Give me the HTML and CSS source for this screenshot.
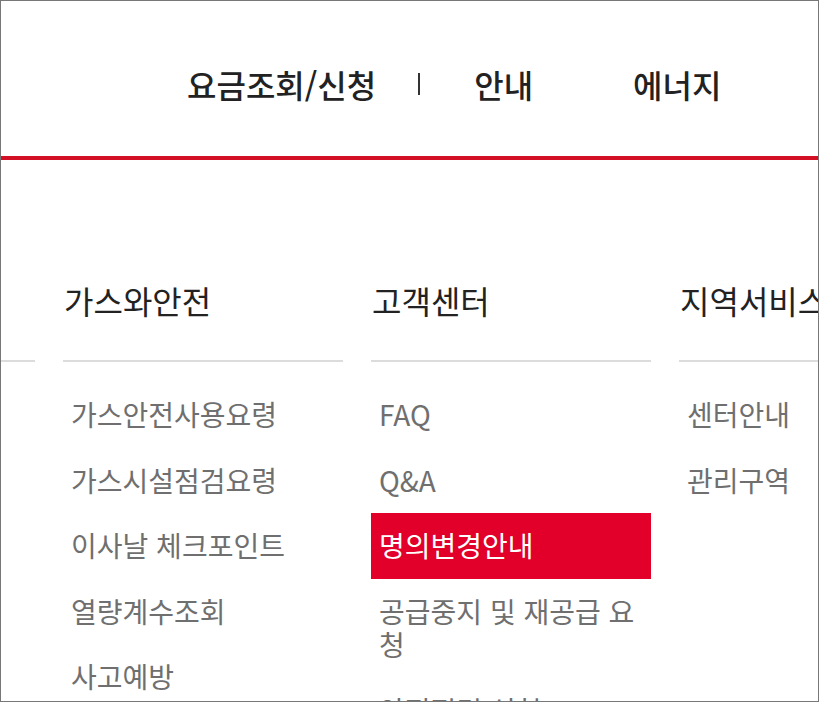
FILE: index.html
```html
<!DOCTYPE html>
<html lang="ko">
<head>
<meta charset="utf-8">
<title>메뉴</title>
<link rel="stylesheet" href="styles.css">
</head>
<body>
<div class="frame">
  <header class="top">
    <nav class="gnb">
      <a class="gnb-item gnb-first" href="#">요금조회/신청</a>
      <span class="gnb-sep"></span>
      <a class="gnb-item gnb-second" href="#">안내</a>
      <a class="gnb-item" href="#">에너지</a>
    </nav>
  </header>
  <section class="mega">
    <div class="col col-prev">
      <div class="col-title"></div>
    </div>
    <div class="col">
      <h3 class="col-title">가스와안전</h3>
      <ul class="sub">
        <li><a href="#">가스안전사용요령</a></li>
        <li><a href="#">가스시설점검요령</a></li>
        <li><a href="#">이사날 체크포인트</a></li>
        <li><a href="#">열량계수조회</a></li>
        <li><a href="#">사고예방</a></li>
      </ul>
    </div>
    <div class="col">
      <h3 class="col-title">고객센터</h3>
      <ul class="sub">
        <li><a href="#">FAQ</a></li>
        <li><a href="#">Q&amp;A</a></li>
        <li class="on"><a href="#">명의변경안내</a></li>
        <li><a href="#">공급중지 및 재공급 요청</a></li>
        <li><a href="#">안전점검 신청</a></li>
      </ul>
    </div>
    <div class="col">
      <h3 class="col-title">지역서비스</h3>
      <ul class="sub">
        <li><a href="#">센터안내</a></li>
        <li><a href="#">관리구역</a></li>
      </ul>
    </div>
  </section>
</div>
</body>
</html>
```
FILE: styles.css
```css
* { box-sizing: border-box; }
html, body { margin: 0; padding: 0; background: #fff; }
body {
  font-family: "Noto Sans CJK KR", "Noto Sans", sans-serif;
  color: #222;
}
a { text-decoration: none; color: inherit; }
ul { list-style: none; margin: 0; padding: 0; }
h3 { margin: 0; font-weight: 400; }

.frame {
  width: 819px;
  height: 702px;
  border: 1px solid #777;
  overflow: hidden;
}

.top {
  height: 159px;
  border-bottom: 4px solid #d20f24;
  display: flex;
  align-items: center;
  padding-top: 10px;
}
.gnb {
  display: flex;
  align-items: center;
  padding-left: 186px;
}
.gnb-item {
  font-size: 32px;
  font-weight: 500;
  line-height: 40px;
  color: #222;
  white-space: nowrap;
}
.gnb-first { margin-right: 42px; }
.gnb-sep {
  width: 2px;
  height: 22px;
  background: #333;
  margin-right: 54px;
}
.gnb-second { margin-right: 100px; }

.mega {
  display: flex;
  gap: 28px;
  margin-left: -246px;
  padding-top: 120px;
}
.col {
  flex: 0 0 280px;
  width: 280px;
}
.col-title {
  height: 40px;
  line-height: 40px;
  font-size: 32px;
  color: #222;
  padding-left: 1px;
  margin: 0;
  white-space: nowrap;
  position: relative;
}
.col-title::after {
  content: "";
  position: absolute;
  left: 0;
  right: 0;
  top: 80px;
  height: 2px;
  background: #dcdcdc;
}
.sub {
  padding-top: 62px;
}
.sub li a {
  display: block;
  padding: 16px 8px;
  font-size: 28px;
  line-height: 33.5px;
  color: #6f6f6f;
}
.sub li.on a {
  background: #e2002a;
  color: #fff;
}
```
